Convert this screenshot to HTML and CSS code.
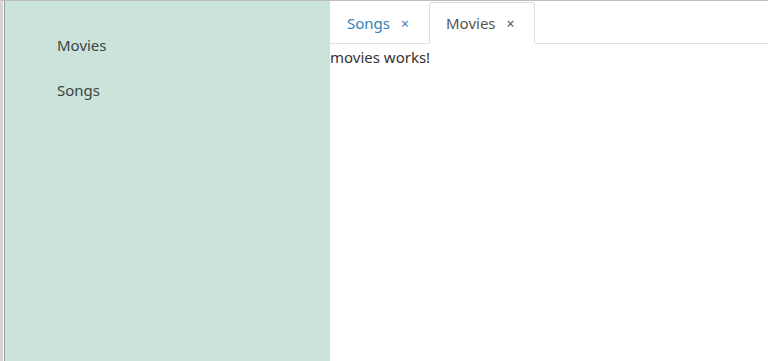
FILE: index.html
```html
<!DOCTYPE html>
<html lang="en">
<head>
    <meta charset="UTF-8">
    <meta name="viewport" content="width=device-width, initial-scale=1.0">
    <title>Media App</title>
    <link rel="stylesheet" href="styles.css">
</head>
<body>
    <div id="app">
        <!-- Side Menu -->
        <nav id="side-menu">
            <a class="menu-item" href="#">Movies</a>
            <a class="menu-item" href="#">Songs</a>
        </nav>

        <!-- Tabbed Content -->
        <main id="content">
            <ul id="tabs">
                <li class="tab">
                    <span class="tab-title">Songs</span>
                    <span class="tab-close">×</span>
                </li>
                <li class="tab active">
                    <span class="tab-title">Movies</span>
                    <span class="tab-close">×</span>
                </li>
            </ul>
            <div id="tab-body">movies works!</div>
        </main>
    </div>
</body>
</html>
```
FILE: styles.css
```css
*{
    box-sizing: border-box;
}
body{
    margin: 0;
    font-family: "Noto Sans", "Open Sans", sans-serif;
    font-size: 15px;
    color: #333;
    background: #fff;
}
#app{
    display: flex;
    height: 361px;
    border-top: 1px solid #bdbdbd;
    border-left: 3px solid #d4d4d4;
}
/*
* Side Menu
*/
#side-menu{
    width: 326px;
    flex-shrink: 0;
    margin-left: 1px;
    border-left: 1px solid #9a9a9a;
    background-color: #cbe4db;
    display: flex;
    flex-direction: column;
    padding: 34px 0 0 52px;
    gap: 24px;
}
.menu-item{
    color: #3a4540;
    text-decoration: none;
    line-height: 21px;
}
/*
* Tabs
*/
#content{
    flex: 1;
}
#tabs{
    display: flex;
    list-style: none;
    margin: 0;
    padding: 1px 0 0 0;
    border-bottom: 1px solid #e2e2e2;
}
.tab{
    display: flex;
    align-items: center;
    gap: 11px;
    padding: 10px 19px 10px 16px;
    border: 1px solid transparent;
    border-radius: 3px 3px 0 0;
    margin-bottom: -1px;
    color: #3583b7;
}
.tab.active{
    color: #555;
    background: #fff;
    border-color: #ddd #ddd transparent #ddd;
}
.tab-close{
    font-size: 14px;
}
#tab-body{
    padding-top: 3px;
    color: #333;
}
```
